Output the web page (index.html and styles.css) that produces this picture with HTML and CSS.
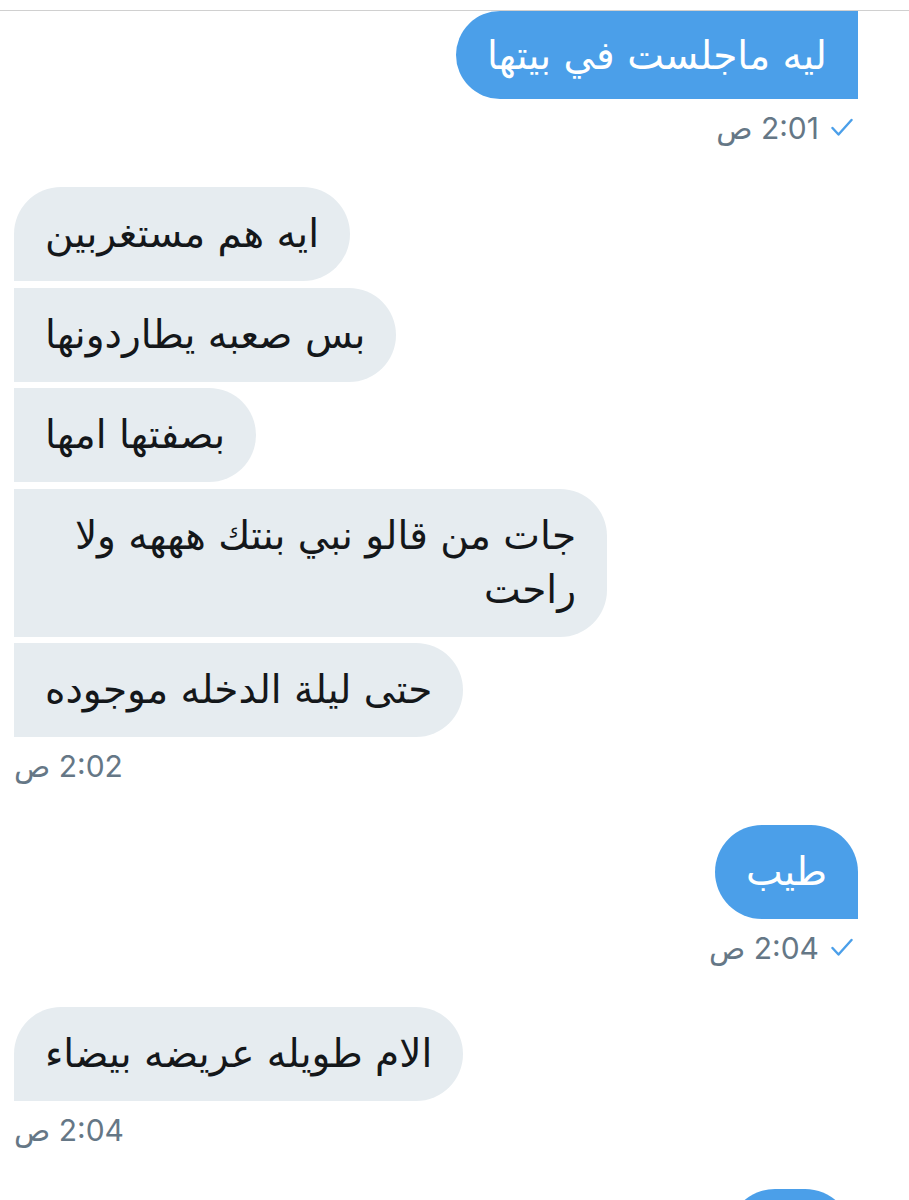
FILE: index.html
```html
<!DOCTYPE html>
<html lang="ar">
<head>
  <meta charset="UTF-8">
  <meta name="viewport" content="width=device-width, initial-scale=1.0">
  <title>الرسائل</title>
  <link rel="stylesheet" href="styles.css">
</head>
<body>
  <div class="chat">

    <div class="group sent">
      <div class="bubble first-cut" dir="rtl">ليه ماجلست في بيتها</div>
      <div class="meta">
        <span class="time" dir="rtl">2:01 ص</span>
        <svg class="check" viewBox="0 0 22 18"><path d="M1.5 9.5 L7.5 16 L20.5 1.5"/></svg>
      </div>
    </div>

    <div class="group received">
      <div class="bubble" dir="rtl">ايه هم مستغربين</div>
      <div class="bubble" dir="rtl">بس صعبه يطاردونها</div>
      <div class="bubble" dir="rtl">بصفتها امها</div>
      <div class="bubble" dir="rtl">جات من قالو نبي بنتك هههه ولا راحت</div>
      <div class="bubble" dir="rtl">حتى ليلة الدخله موجوده</div>
      <div class="meta">
        <span class="time" dir="rtl">2:02 ص</span>
      </div>
    </div>

    <div class="group sent">
      <div class="bubble" dir="rtl">طيب</div>
      <div class="meta">
        <span class="time" dir="rtl">2:04 ص</span>
        <svg class="check" viewBox="0 0 22 18"><path d="M1.5 9.5 L7.5 16 L20.5 1.5"/></svg>
      </div>
    </div>

    <div class="group received">
      <div class="bubble" dir="rtl">الام طويله عريضه بيضاء</div>
      <div class="meta">
        <span class="time" dir="rtl">2:04 ص</span>
      </div>
    </div>

    <div class="group sent">
      <div class="bubble pending" aria-hidden="true">&nbsp;</div>
    </div>

  </div>
</body>
</html>
```

FILE: styles.css
```css
* { box-sizing: border-box; }
body { margin: 0; background: #fff; font-family: "DejaVu Sans", sans-serif; }
.chat { border-top: 1px solid #d0d0d0; margin-top: 10px; padding: 0 51px 0 14px; display: flex; flex-direction: column; }

.group { display: flex; flex-direction: column; gap: 6.5px; margin-bottom: 44.5px; }
.group.sent { align-items: flex-end; }
.group.received { align-items: flex-start; }

.bubble { max-width: 593px; padding: 20px 31px; font-size: 39px; line-height: 54px; border-radius: 47px; }
.sent .bubble { background: #4b9fe9; color: #fff; border-bottom-right-radius: 0; }
.sent .bubble.first-cut { border-top-right-radius: 0; padding-top: 18px; padding-bottom: 16px; }
.received .bubble { background: #e6ecf0; color: #14171a; border-radius: 0 47px 47px 0; }
.received .bubble:first-child { border-top-left-radius: 47px; }
.bubble.pending { width: 124px; margin-right: 6px; }

.meta { display: flex; align-items: center; gap: 12px; margin-top: 7px; height: 30px; padding: 0 5px 0 0; }
.received .meta { padding: 0; }
.time { font-family: "Inter", "DejaVu Sans", sans-serif; font-size: 30px; color: #657786; line-height: 30px; }
.check { width: 22px; height: 19px; fill: none; stroke: #4b9fe9; stroke-width: 2.4; stroke-linecap: round; stroke-linejoin: round; }
```
